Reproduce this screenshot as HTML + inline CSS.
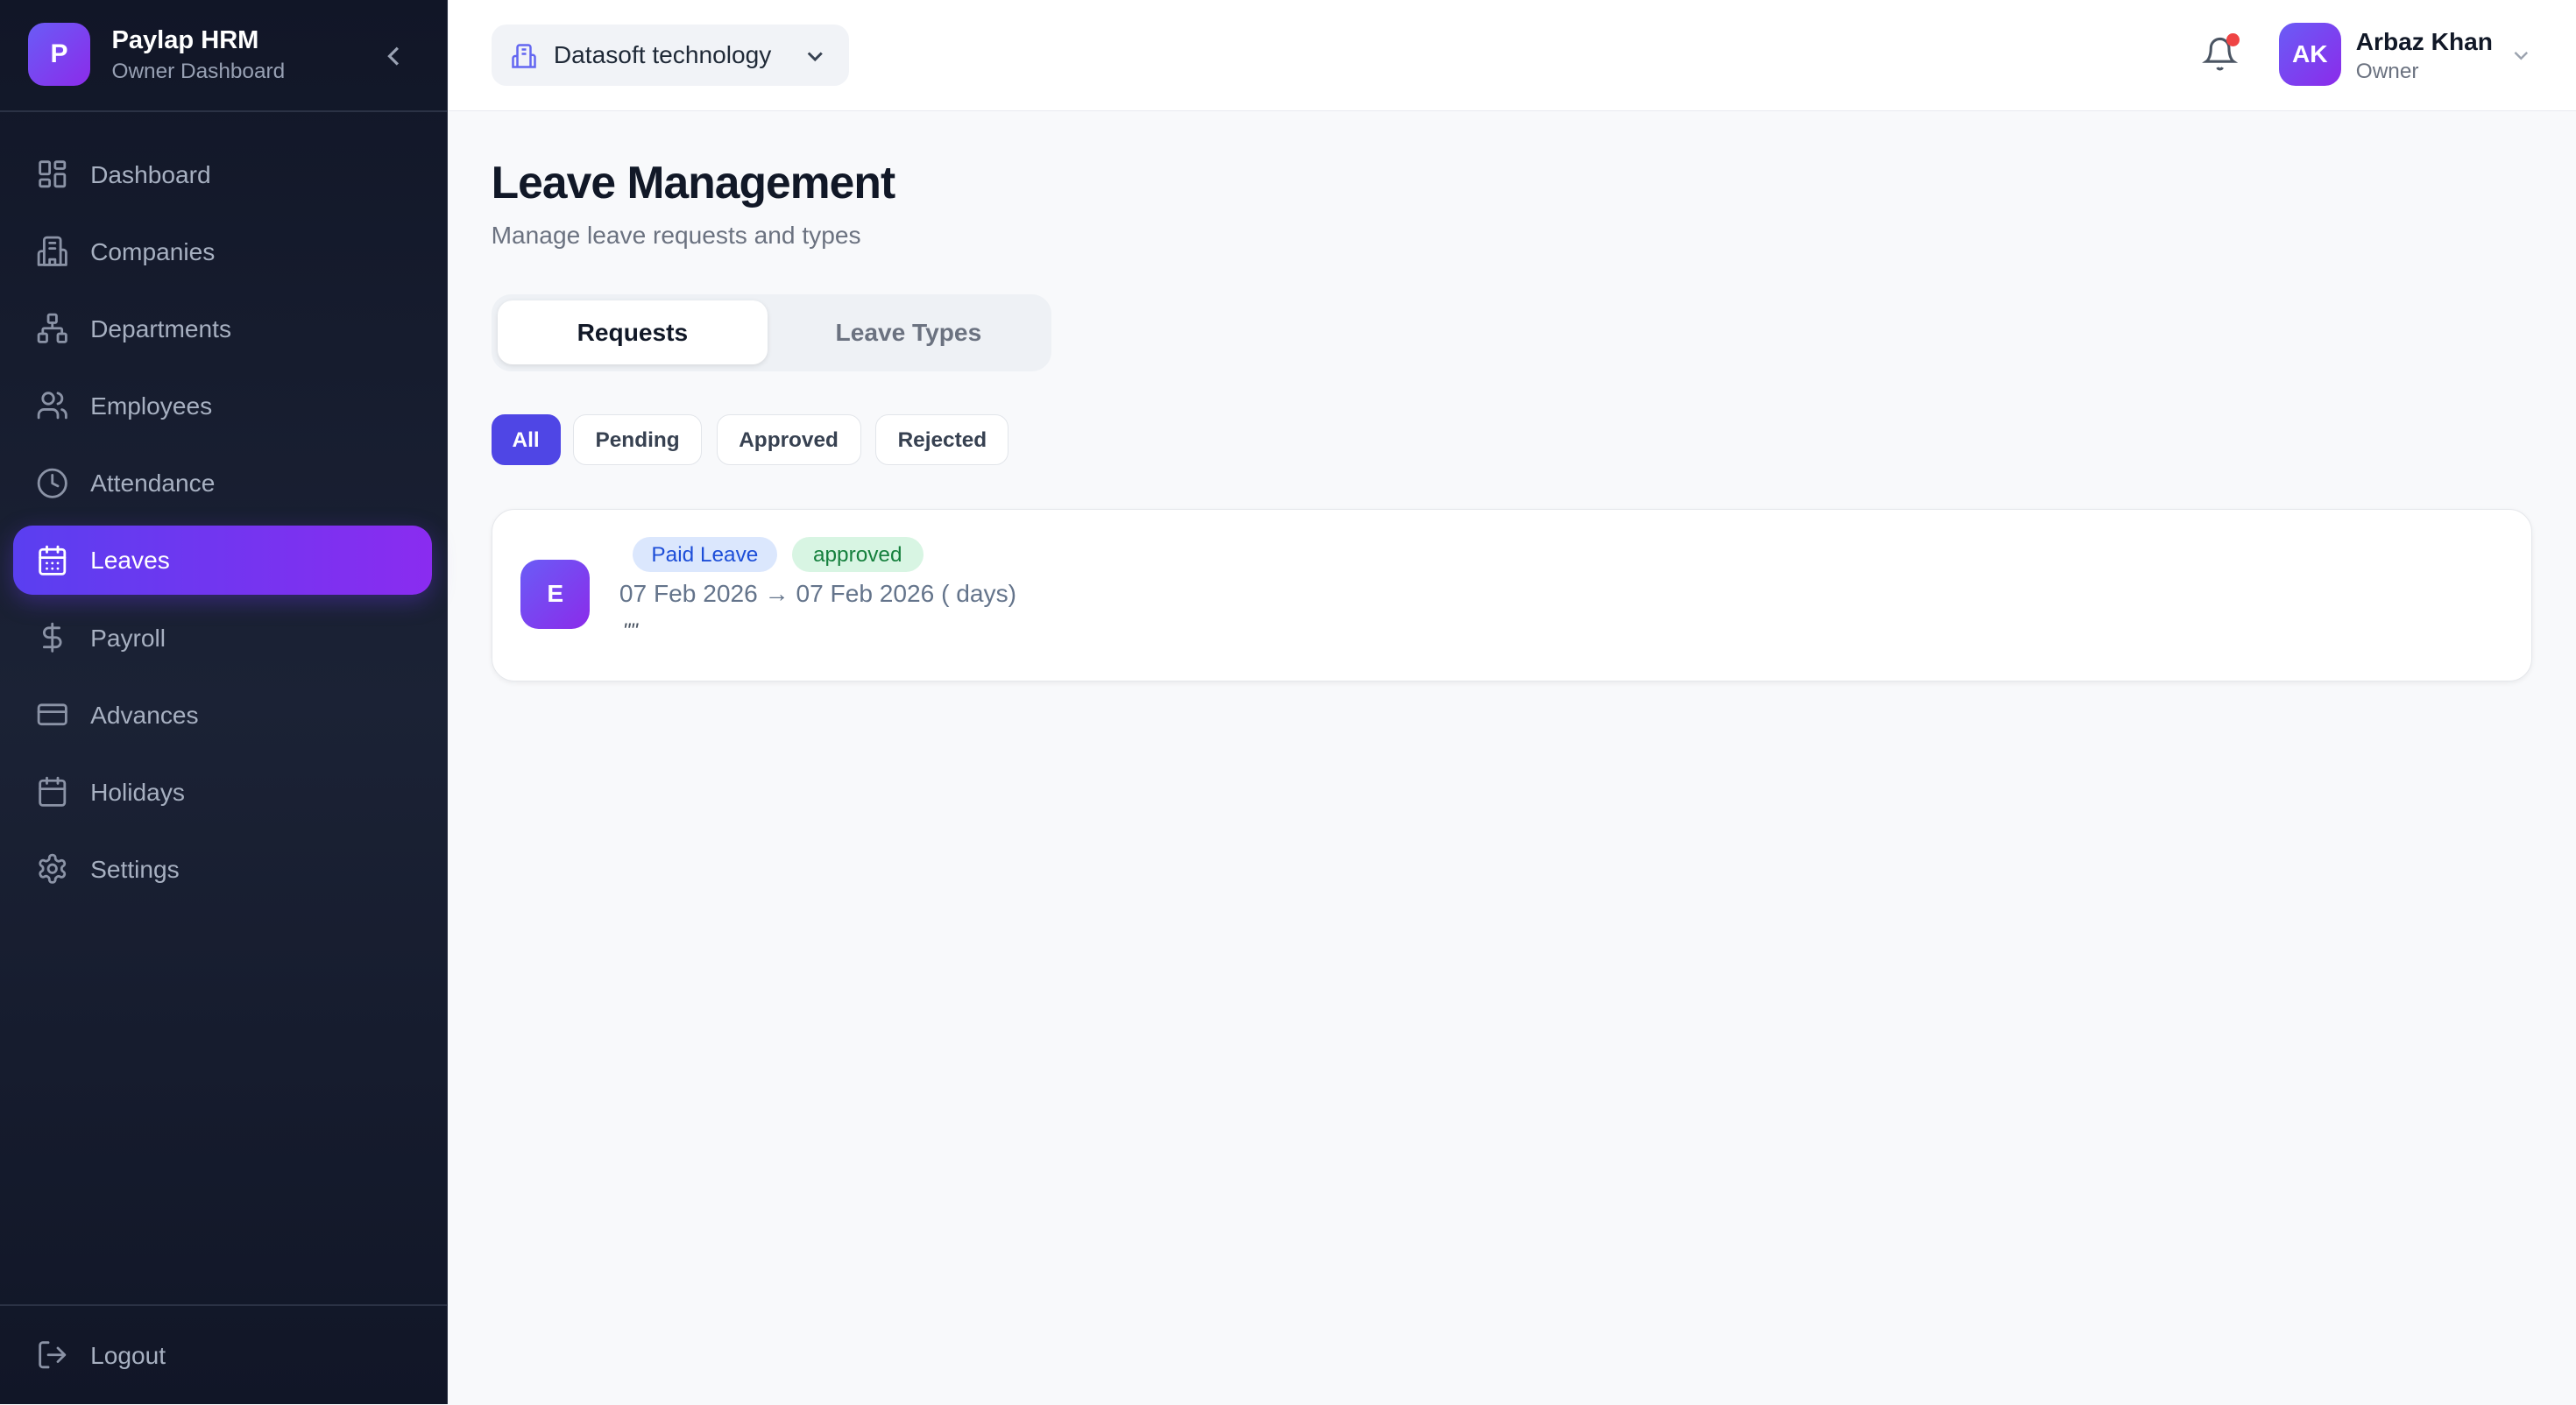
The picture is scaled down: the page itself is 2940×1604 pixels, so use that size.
<!DOCTYPE html>
<html><head><meta charset="utf-8"><style>
html{zoom:1.875}
body{margin:0;width:1568px;height:855px;overflow:hidden;font-family:"Liberation Sans",sans-serif;background:#f8f9fb;position:relative}
.sb{position:absolute;left:0;top:0;width:272px;height:855px;background:linear-gradient(180deg,#111627,#1b2235 50%,#111627);border-right:1px solid #2a3042}
.logo{position:absolute;left:17px;top:14px;width:38px;height:38px;border-radius:10px;background:linear-gradient(135deg,#6a5cf6,#8b2bea);color:#fff;font-weight:bold;font-size:16px;text-align:center;line-height:38px}
.t1{position:absolute;left:68px;top:16px;color:#fff;font-weight:bold;font-size:15.5px}
.t2{position:absolute;left:68px;top:36px;color:#97a0b3;font-size:13px}
.hr{position:absolute;left:0;width:272px;height:1px;background:#2b3245}
.it{position:absolute;left:8px;width:255px;height:42px;color:#a7b0c1;font-size:15px}
.it svg{position:absolute;left:14px;top:11px;width:20px;height:20px;fill:none;stroke:#8b93a6;stroke-width:1.8;stroke-linecap:round;stroke-linejoin:round}
.it span{position:absolute;left:47px;top:13px}
.act{background:linear-gradient(90deg,#5a3ff0,#8a2cf0);border-radius:12px;color:#fff;box-shadow:0 4px 14px rgba(110,60,240,.35)}
.act svg{stroke:#fff}
.top{position:absolute;left:273px;top:0;right:0;height:67px;background:#fff;border-bottom:1px solid #e8eaef}
.co{position:absolute;left:299px;top:15px;width:218px;height:37px;border-radius:9px;background:#f1f3f7;font-size:15px;color:#1f2937}
.pill{position:absolute;height:30px;border:1px solid #e2e5ea;border-radius:8px;background:#fff;font-size:13px;color:#374151;font-weight:bold;text-align:center;line-height:31px}
</style></head><body>
<div class="sb">
<div class="logo">P</div><div class="t1">Paylap HRM</div><div class="t2">Owner Dashboard</div>
<svg style="position:absolute;left:233px;top:27px" width="14" height="14" viewBox="0 0 14 14"><path d="M9 2L4 7l5 5" fill="none" stroke="#9aa2b3" stroke-width="1.7"/></svg>
<div class="hr" style="top:67px"></div>
<div class="it" style="top:85px"><svg viewBox="0 0 24 24"><rect x="3" y="3" width="7" height="9" rx="1"/><rect x="14" y="3" width="7" height="5" rx="1"/><rect x="14" y="12" width="7" height="9" rx="1"/><rect x="3" y="16" width="7" height="5" rx="1"/></svg><span>Dashboard</span></div>
<div class="it" style="top:132px"><svg viewBox="0 0 24 24"><path d="M6 22V4a2 2 0 012-2h8a2 2 0 012 2v18Z"/><path d="M6 12H4a2 2 0 00-2 2v8h20v-9a2 2 0 00-2-2h-2M10 6h4M10 10h4M10 22v-4h4v4"/></svg><span>Companies</span></div>
<div class="it" style="top:179px"><svg viewBox="0 0 24 24"><rect x="9" y="2" width="6" height="6" rx="1"/><rect x="2" y="16" width="6" height="6" rx="1"/><rect x="16" y="16" width="6" height="6" rx="1"/><path d="M5 16v-3a1 1 0 011-1h12a1 1 0 011 1v3M12 12V8"/></svg><span>Departments</span></div>
<div class="it" style="top:226px"><svg viewBox="0 0 24 24"><circle cx="9" cy="7" r="4"/><path d="M2 21v-2a4 4 0 014-4h6a4 4 0 014 4v2M16 3.1a4 4 0 010 7.8M22 21v-2a4 4 0 00-3-3.9"/></svg><span>Employees</span></div>
<div class="it" style="top:273px"><svg viewBox="0 0 24 24"><circle cx="12" cy="12" r="10"/><path d="M12 6v6l4 2"/></svg><span>Attendance</span></div>
<div class="it act" style="top:320px"><svg viewBox="0 0 24 24"><rect x="3" y="4" width="18" height="18" rx="2"/><path d="M8 2v4M16 2v4M3 10h18M8 14h.01M12 14h.01M16 14h.01M8 18h.01M12 18h.01M16 18h.01"/></svg><span>Leaves</span></div>
<div class="it" style="top:367px"><svg viewBox="0 0 24 24"><path d="M12 2v20M17 5H9.5a3.5 3.5 0 000 7h5a3.5 3.5 0 010 7H6"/></svg><span>Payroll</span></div>
<div class="it" style="top:414px"><svg viewBox="0 0 24 24"><rect x="2" y="5" width="20" height="14" rx="2"/><path d="M2 10h20"/></svg><span>Advances</span></div>
<div class="it" style="top:461px"><svg viewBox="0 0 24 24"><rect x="3" y="4" width="18" height="18" rx="2"/><path d="M8 2v4M16 2v4M3 10h18"/></svg><span>Holidays</span></div>
<div class="it" style="top:508px"><svg viewBox="0 0 24 24"><circle cx="12" cy="12" r="3"/><path d="M12.2 2h-.4a2 2 0 00-2 2v.2a2 2 0 01-1 1.7l-.4.3a2 2 0 01-2 0l-.2-.1a2 2 0 00-2.7.7l-.2.4a2 2 0 00.7 2.7l.2.1a2 2 0 011 1.7v.5a2 2 0 01-1 1.7l-.2.1a2 2 0 00-.7 2.7l.2.4a2 2 0 002.7.7l.2-.1a2 2 0 012 0l.4.3a2 2 0 011 1.7V20a2 2 0 002 2h.4a2 2 0 002-2v-.2a2 2 0 011-1.7l.4-.3a2 2 0 012 0l.2.1a2 2 0 002.7-.7l.2-.4a2 2 0 00-.7-2.7l-.2-.1a2 2 0 01-1-1.7v-.5a2 2 0 011-1.7l.2-.1a2 2 0 00.7-2.7l-.2-.4a2 2 0 00-2.7-.7l-.2.1a2 2 0 01-2 0l-.4-.3a2 2 0 01-1-1.7V4a2 2 0 00-2-2z"/></svg><span>Settings</span></div>
<div class="hr" style="top:794px"></div>
<div class="it" style="top:804px"><svg viewBox="0 0 24 24"><path d="M9 21H5a2 2 0 01-2-2V5a2 2 0 012-2h4M16 17l5-5-5-5M21 12H9"/></svg><span>Logout</span></div>
</div>
<div class="top"></div>
<div class="co"><svg style="position:absolute;left:12px;top:11px" width="16" height="16" viewBox="0 0 24 24" fill="none" stroke="#6366f1" stroke-width="2"><path d="M6 22V4a2 2 0 012-2h8a2 2 0 012 2v18ZM6 12H4a2 2 0 00-2 2v8h20v-9a2 2 0 00-2-2h-2M10 6h4M10 10h4"/></svg><span style="position:absolute;left:38px;top:10px">Datasoft technology</span><svg style="position:absolute;left:191px;top:13px" width="12" height="12" viewBox="0 0 12 12"><path d="M2 4l4 4 4-4" fill="none" stroke="#374151" stroke-width="1.6"/></svg></div>
<svg style="position:absolute;left:1340px;top:22px" width="22" height="22" viewBox="0 0 24 24" fill="none" stroke="#4b5563" stroke-width="1.8"><path d="M6 8a6 6 0 0112 0c0 7 3 9 3 9H3s3-2 3-9M10.3 21a1.9 1.9 0 003.4 0"/></svg>
<div style="position:absolute;left:1355px;top:20px;width:8px;height:8px;border-radius:50%;background:#ef4444"></div>
<div style="position:absolute;left:1387px;top:14px;width:38px;height:38px;border-radius:10px;background:linear-gradient(135deg,#6a5cf6,#8b2bea);color:#fff;font-weight:bold;font-size:15px;text-align:center;line-height:38px">AK</div>
<div style="position:absolute;left:1434px;top:17px;font-weight:bold;font-size:15px;color:#111827">Arbaz Khan</div>
<div style="position:absolute;left:1434px;top:36px;font-size:13px;color:#6b7280">Owner</div>
<svg style="position:absolute;left:1529px;top:28px" width="11" height="11" viewBox="0 0 12 12"><path d="M2 4l4 4 4-4" fill="none" stroke="#9ca3af" stroke-width="1.4"/></svg>
<div style="position:absolute;left:299px;top:95px;font-size:27.5px;font-weight:bold;color:#111827;letter-spacing:-.5px">Leave Management</div>
<div style="position:absolute;left:299px;top:135px;font-size:15px;color:#6b7280">Manage leave requests and types</div>
<div style="position:absolute;left:299px;top:179px;width:341px;height:47px;border-radius:12px;background:#eef1f5"></div>
<div style="position:absolute;left:303px;top:183px;width:164px;height:39px;border-radius:9px;background:#fff;box-shadow:0 1px 3px rgba(0,0,0,.1);text-align:center;line-height:39px;font-size:15px;font-weight:bold;color:#111827">Requests</div>
<div style="position:absolute;left:467px;top:183px;width:172px;height:39px;text-align:center;line-height:39px;font-size:15px;font-weight:bold;color:#6b7280">Leave Types</div>
<div class="pill" style="left:299px;top:252px;width:41px;background:#4f46e5;border-color:#4f46e5;color:#fff">All</div>
<div class="pill" style="left:349px;top:252px;width:77px">Pending</div>
<div class="pill" style="left:436px;top:252px;width:87px">Approved</div>
<div class="pill" style="left:533px;top:252px;width:80px">Rejected</div>
<div style="position:absolute;left:299px;top:310px;width:1241px;height:104px;border:1px solid #e5e7eb;border-radius:14px;background:#fff;box-shadow:0 1px 3px rgba(0,0,0,.06)"></div>
<div style="position:absolute;left:317px;top:341px;width:42px;height:42px;border-radius:11px;background:linear-gradient(135deg,#6a5cf6,#8b2bea);color:#fff;font-weight:bold;font-size:15px;text-align:center;line-height:42px">E</div>
<div style="position:absolute;left:385px;top:327px;width:88px;height:21px;border-radius:11px;background:#dbe7fd;color:#1d4ed8;font-size:13px;text-align:center;line-height:22px">Paid Leave</div>
<div style="position:absolute;left:482px;top:327px;width:80px;height:21px;border-radius:11px;background:#d8f5e3;color:#15803d;font-size:13px;text-align:center;line-height:22px">approved</div>
<div style="position:absolute;left:377px;top:353px;font-size:15px;color:#64748b">07 Feb 2026 → 07 Feb 2026 ( days)</div>
<div style="position:absolute;left:379px;top:377px;font-size:13px;color:#4b5563;font-style:italic">""</div>
</body></html>
